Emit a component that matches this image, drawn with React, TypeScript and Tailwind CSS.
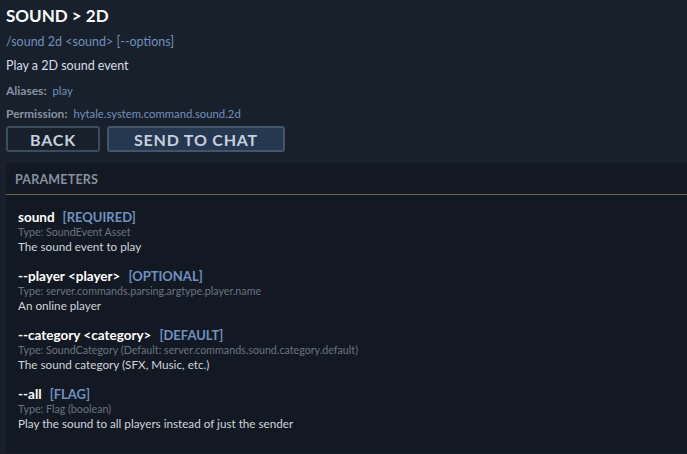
import React from 'react';

interface Param {
  name: string;
  tag: string;
  type: string;
  desc: string;
}

const params: Param[] = [
  { name: 'sound', tag: '[REQUIRED]', type: 'Type: SoundEvent Asset', desc: 'The sound event to play' },
  {
    name: '--player <player>',
    tag: '[OPTIONAL]',
    type: 'Type: server.commands.parsing.argtype.player.name',
    desc: 'An online player',
  },
  {
    name: '--category <category>',
    tag: '[DEFAULT]',
    type: 'Type: SoundCategory (Default: server.commands.sound.category.default)',
    desc: 'The sound category (SFX, Music, etc.)',
  },
  {
    name: '--all',
    tag: '[FLAG]',
    type: 'Type: Flag (boolean)',
    desc: 'Play the sound to all players instead of just the sender',
  },
];

export default function App() {
  return (
    <div
      className="w-[687px] h-[454px] overflow-hidden bg-[#18202c] text-[#d6dbe2]"
      style={{ fontFamily: 'Lato, "Noto Sans", sans-serif' }}
    >
      <div className="px-[6px] pt-[4px]">
        <h1 className="text-[17px] font-bold text-white leading-[24px]">SOUND &gt; 2D</h1>
        <div className="mt-[6px] text-[12.5px] text-[#6f90bb] leading-[16px]">/sound 2d &lt;sound&gt; [--options]</div>
        <div className="mt-[8px] text-[12.5px] text-[#d8dde4] leading-[16px]">Play a 2D sound event</div>
        <div className="mt-[10px] text-[11.3px] leading-[14px]">
          <span className="font-bold text-[12px] text-[#8893a1]">Aliases:</span>
          <span className="ml-[6px] text-[#6f90bb]">play</span>
        </div>
        <div className="mt-[9px] text-[11.3px] leading-[14px]">
          <span className="font-bold text-[12px] text-[#8893a1]">Permission:</span>
          <span className="ml-[6px] text-[#6f90bb]">hytale.system.command.sound.2d</span>
        </div>
        <div className="mt-[5px] flex gap-[7px]">
          <button className="w-[94px] h-[26px] rounded-[3px] border-2 border-[#3d4b5e] bg-[#18202c] text-[16px] font-bold text-[#c5d0dc] tracking-[0.8px]">
            BACK
          </button>
          <button className="w-[178px] h-[26px] rounded-[3px] border-2 border-[#44546b] bg-[#263750] text-[16px] font-bold text-[#c5d0dc] tracking-[0.8px]">
            SEND TO CHAT
          </button>
        </div>
      </div>
      <div className="ml-[6px] mt-[11px] h-[290px] bg-[#131922]">
        <div className="h-[32px] border-b border-[#6e6240] pl-[9px] pt-[8px] text-[12.5px] font-bold text-[#87909c] tracking-[0.2px]">
          PARAMETERS
        </div>
        <div className="pl-[12px] pt-[14px] flex flex-col gap-[14px]">
          {params.map((p) => (
            <div key={p.name}>
              <div className="text-[13.5px] font-bold leading-[16px]">
                <span className="text-white">{p.name}</span>
                <span className="ml-[8px] text-[13px] text-[#6f92c0]">{p.tag}</span>
              </div>
              <div className="text-[10.7px] text-[#697380] leading-[14px]">{p.type}</div>
              <div className="text-[11.7px] text-[#d0d5dc] leading-[15px]">{p.desc}</div>
            </div>
          ))}
        </div>
      </div>
    </div>
  );
}
